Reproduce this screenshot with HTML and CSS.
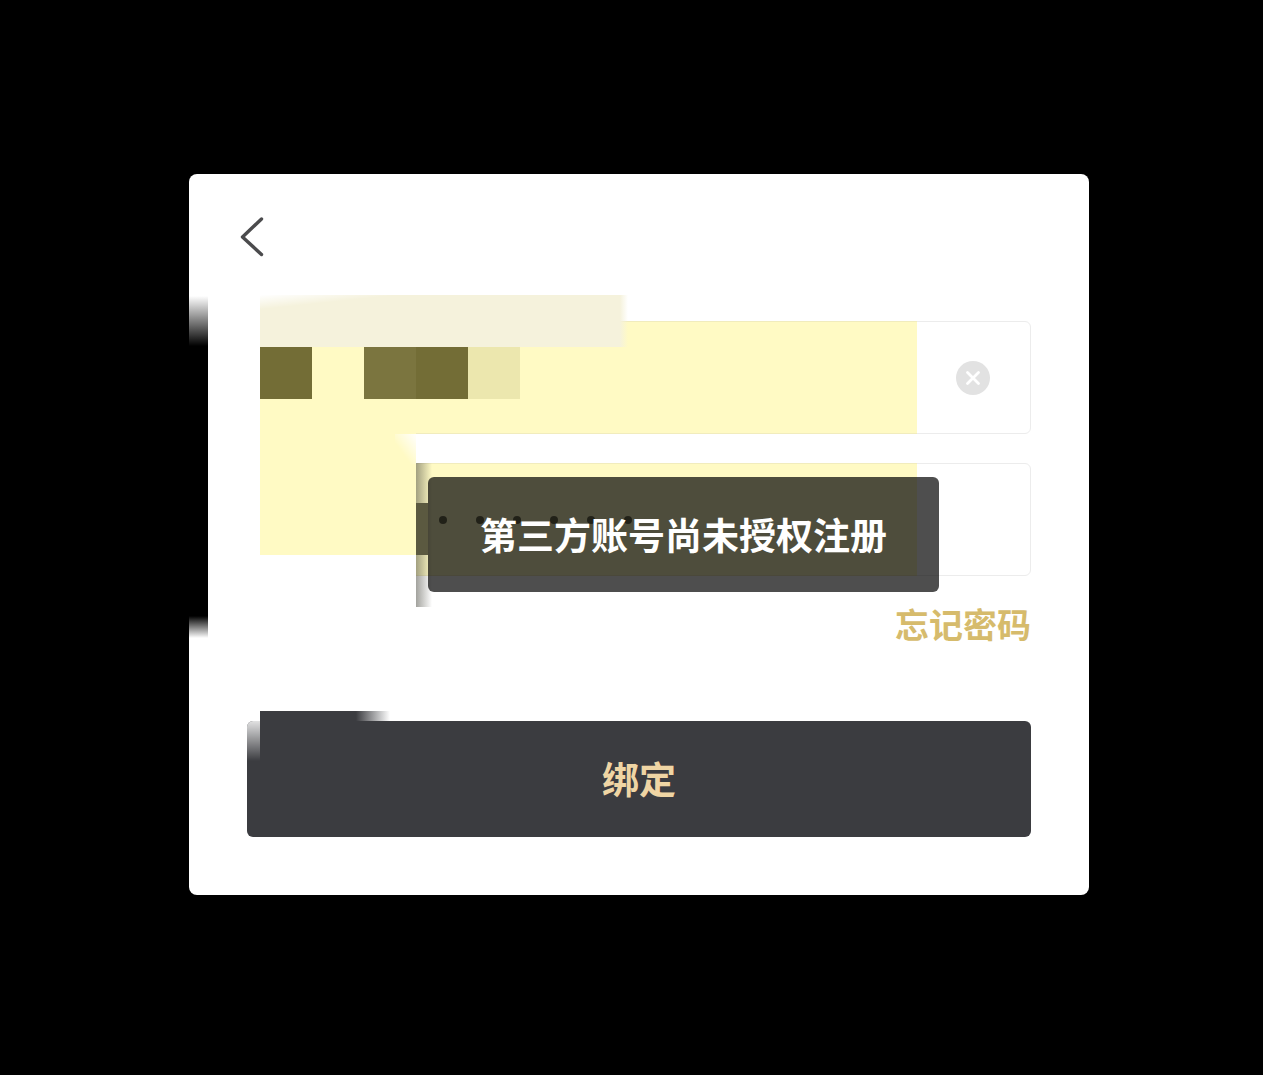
FILE: index.html
```html
<!DOCTYPE html>
<html lang="zh-CN">
<head>
<meta charset="utf-8">
<title>绑定</title>
<link rel="stylesheet" href="styles.css">
</head>
<body>
<main class="modal">
  <button class="back" type="button" aria-label="返回">
    <svg width="28" height="42" viewBox="0 0 28 42"><polyline points="24.5,3 5.5,21 24.5,38.5" fill="none" stroke="#4b4b4d" stroke-width="3.4" stroke-linecap="round" stroke-linejoin="round"/></svg>
  </button>

  <div class="field">
    <div class="fill mosaic">
      <span class="cell c1"></span><span class="cell"></span><span class="cell c2"></span><span class="cell c1"></span><span class="cell c3"></span>
    </div>
    <div class="field-end">
      <svg width="34" height="34" viewBox="0 0 34 34"><circle cx="17" cy="17" r="17" fill="#e2e2e2"/><path d="M11.5 11.5l11 11M22.5 11.5l-11 11" stroke="#fff" stroke-width="2.8" stroke-linecap="round"/></svg>
    </div>
  </div>

  <div class="field second">
    <div class="fill dots">
      <i></i><i></i><i></i><i></i><i></i><i></i>
    </div>
    <div class="field-end"></div>
  </div>

  <a class="forgot">忘记密码</a>
  <button class="submit" type="button">绑定</button>

  <div class="blot edge-shade"></div>
  <div class="blot mask-left"></div>
  <div class="blot beige"></div>
  <div class="blot mask-mid"></div>
  <div class="blot corner-fade"></div>
  <div class="blot strip"></div>
  <div class="blot strip-dark"></div>
  <div class="blot btn-flare"></div>
  <div class="blot btn-corner"></div>

  <div class="toast">第三方账号尚未授权注册</div>
</main>
</body>
</html>
```
FILE: styles.css
```css
* { box-sizing: border-box; }
html, body { margin: 0; height: 100%; }
body {
  background: #000;
  padding: 174px 0 0 189px;
  font-family: "Noto Sans CJK SC", "Noto Sans", sans-serif;
  overflow: hidden;
}
.modal {
  position: relative;
  width: 900px;
  background: #fff;
  border-radius: 8px;
  padding: 42px 58px 58px;
}
.back {
  display: block;
  margin: 0 0 0 -10px;
  padding: 0;
  border: 0;
  background: none;
  height: 42px;
}
.back svg { display: block; }
.field {
  display: flex;
  height: 113px;
  margin-top: 63px;
  border: 1px solid #ececec;
  border-radius: 6px;
}
.field.second { margin-top: 29px; }
.fill {
  width: 670px;
  margin: -1px 0 -1px -1px;
  background: #fffac4;
  border-block: 1px solid #f1ecbd;
}
.mosaic {
  display: flex;
  align-items: flex-start;
  padding: 25px 0 0 13px;
}
.cell { width: 52px; height: 52px; }
.c1 { background: #736d36; }
.c2 { background: #7b753f; }
.c3 { background: #ece7ae; }
.field-end {
  flex: 1;
  display: flex;
  align-items: center;
  justify-content: center;
  padding-right: 2px;
}
.second .fill {
  width: 501px;
  margin-left: 168px;
  display: flex;
  align-items: flex-start;
  gap: 29px;
  padding: 52px 0 0 23px;
}
.dots i {
  width: 8px;
  height: 8px;
  border-radius: 50%;
  background: #6e6d50;
}
.forgot {
  display: block;
  margin-top: 26px;
  font-size: 34px;
  line-height: 44px;
  font-weight: 700;
  color: #d6bb6c;
  text-align: right;
}
.submit {
  display: block;
  width: 100%;
  height: 116px;
  margin-top: 75px;
  padding: 0 0 2px;
  border: 0;
  border-radius: 6px;
  background: #3b3c40;
  color: #efd5a4;
  font: 700 37px/1 "Noto Sans CJK SC", "Noto Sans", sans-serif;
}
.blot { position: absolute; }
.edge-shade {
  left: 0; top: 122px; width: 19px; height: 342px;
  background: linear-gradient(to bottom, rgba(0,0,0,0) 0, #000 50px, #000 320px, rgba(0,0,0,0) 342px);
}
.mask-left {
  left: 57px; top: 121px; width: 14px; height: 345px;
  background: #fff;
}
.beige {
  left: 71px; top: 121px; width: 368px; height: 52px;
  background:
    linear-gradient(174deg, #fff 0, rgba(255,255,255,0) 16%),
    linear-gradient(to right, #f5f2dc 0, #f5f2dc 360px, rgba(245,242,220,0) 368px);
}
.mask-mid {
  left: 71px; top: 259px; width: 156px; height: 174px;
  background: linear-gradient(to bottom, #fffac4 0, #fffac4 122px, #fff 122px);
}
.corner-fade {
  left: 206px; top: 260px; width: 22px; height: 30px;
  background: linear-gradient(to bottom left, #fff 0, rgba(255,255,255,0) 65%);
}
.strip {
  left: 227px; top: 289px; width: 16px; height: 144px;
  background: linear-gradient(to right, rgba(70,70,60,.5) 0, rgba(70,70,60,0) 100%);
}
.strip-dark {
  left: 227px; top: 329px; width: 12px; height: 52px;
  background: #5b5940;
}
.btn-flare {
  left: 71px; top: 537px; width: 130px; height: 10px;
  background: linear-gradient(to right, #3b3c40 0, #3b3c40 96px, rgba(59,60,64,0) 130px);
}
.btn-corner {
  left: 58px; top: 547px; width: 13px; height: 40px;
  background: linear-gradient(to bottom, rgba(255,255,255,.85) 0, rgba(255,255,255,0) 100%);
  border-top-left-radius: 6px;
}
.toast {
  position: absolute;
  left: 239px;
  top: 303px;
  width: 511px;
  height: 115px;
  padding-bottom: 2px;
  display: flex;
  align-items: center;
  justify-content: center;
  background: rgba(0,0,0,.695);
  border-radius: 6px;
  color: #fff;
  font-size: 37px;
  font-weight: 700;
  white-space: nowrap;
}
```
